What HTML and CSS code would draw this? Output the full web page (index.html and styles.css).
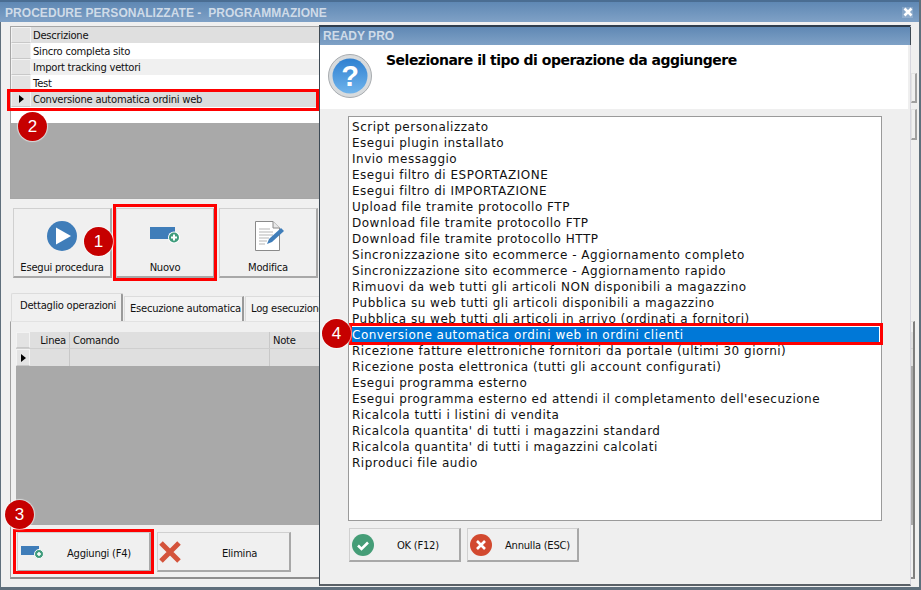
FILE: index.html
```html
<!DOCTYPE html>
<html lang="it">
<head>
<meta charset="utf-8">
<title>Procedure personalizzate</title>
<link rel="stylesheet" href="styles.css">
</head>
<body>
<div class="window">
  <div class="titlebar">
    <span class="title">PROCEDURE PERSONALIZZATE -&nbsp; PROGRAMMAZIONE</span>
    <span class="close"><svg width="10" height="10" viewBox="0 0 10 10"><path d="M1.500 1.500l7 7M8.500 1.500l-7 7" stroke="#fff" stroke-width="2.600" fill="none"/></svg></span>
  </div>
  <div class="main">
    <div class="pane">
      <div class="grid top-grid">
        <div class="row head"><span class="ind"></span><span class="cell">Descrizione</span></div>
        <div class="row"><span class="ind"></span><span class="cell">Sincro completa sito</span></div>
        <div class="row alt"><span class="ind"></span><span class="cell">Import tracking vettori</span></div>
        <div class="row"><span class="ind"></span><span class="cell">Test</span></div>
        <div class="row sel"><span class="ind"><i class="arrow"></i></span><span class="cell">Conversione automatica ordini web</span></div>
        <div class="row"><span class="ind blank"></span><span class="cell"></span></div>
      </div>
      <div class="toolbar">
        <div class="tbtn">
          <svg width="32" height="32" viewBox="0 0 32 32"><circle cx="16" cy="16" r="15" fill="#3f7db9"/><path d="M10 7.500L25 16 10 24.500z" fill="#fff"/></svg>
          <span>Esegui procedura</span>
        </div>
        <div class="tbtn">
          <svg width="32" height="32" viewBox="0 0 32 32"><rect x="1" y="7" width="25" height="12" fill="#3f7db9"/><circle cx="25" cy="17.500" r="6" fill="#fff"/><circle cx="25" cy="17.500" r="5" fill="#3f9c7c"/><path d="M25 14.500v6M22 17.500h6" stroke="#fff" stroke-width="2"/></svg>
          <span>Nuovo</span>
        </div>
        <div class="tbtn">
          <svg width="32" height="32" viewBox="0 0 32 32"><path d="M3.500 1.500H21L27.500 8V30.500H3.500z" fill="#fff" stroke="#8a8a8a"/><path d="M21 1.500V8H27.500" fill="#e8e8e8" stroke="#8a8a8a"/><path d="M7 9h11M7 12h14M7 15h14M7 18h10M7 21h8M7 24h6" stroke="#b5b5b5"/><path d="M29 8l3 3-12 11-5 2 2-5z" fill="#3f7db9"/></svg>
          <span>Modifica</span>
        </div>
      </div>
      <div class="tabs">
        <span class="tab active">Dettaglio operazioni</span>
        <span class="tab second">Esecuzione automatica</span>
        <span class="tab">Log esecuzione</span>
      </div>
      <div class="panel">
        <div class="grid sub-grid">
          <div class="row head"><span class="ind"></span><span class="c-line">Linea</span><span class="c-cmd">Comando</span><span class="c-note">Note</span></div>
          <div class="row data"><span class="ind"><i class="arrow"></i></span><span class="c-line"></span><span class="c-cmd"></span><span class="c-note"></span></div>
        </div>
        <div class="actions">
          <div class="abtn">
            <svg width="22" height="14" viewBox="0 0 22 14"><rect x="0" y="1" width="18" height="9" fill="#3f7db9"/><circle cx="18" cy="9" r="4.500" fill="#3f9c7c" stroke="#fff"/><path d="M18 7v4M16 9h4" stroke="#fff" stroke-width="1.500"/></svg>
            <span class="add-label">Aggiungi (F4)</span>
          </div>
          <div class="abtn del">
            <svg width="24" height="24" viewBox="0 0 24 24"><path d="M3 3l18 18M21 3L3 21" stroke="#d4533b" stroke-width="5" fill="none"/></svg>
            <span class="del-label">Elimina</span>
          </div>
        </div>
      </div>
    </div>
    <div class="rail"><span class="stub first"></span><span class="stub"></span></div>
  </div>

  <div class="dialog">
    <div class="dlg-title">READY PRO</div>
    <div class="dlg-head">
      <svg width="46" height="46" viewBox="0 0 46 46">
        <defs><linearGradient id="qb" x1="0" y1="0" x2="0" y2="1"><stop offset="0" stop-color="#2f80d0"/><stop offset="1" stop-color="#6fb4ec"/></linearGradient></defs>
        <circle cx="23" cy="23" r="21.500" fill="#d8dbdd" stroke="#a8acb0"/>
        <circle cx="23" cy="23" r="17.500" fill="url(#qb)"/>
        <text x="23" y="33" text-anchor="middle" class="qmark">?</text>
      </svg>
      <span class="dlg-heading">Selezionare il tipo di operazione da aggiungere</span>
    </div>
    <div class="dlg-body">
      <ul class="list">
        <li>Script personalizzato</li>
        <li>Esegui plugin installato</li>
        <li>Invio messaggio</li>
        <li>Esegui filtro di ESPORTAZIONE</li>
        <li>Esegui filtro di IMPORTAZIONE</li>
        <li>Upload file tramite protocollo FTP</li>
        <li>Download file tramite protocollo FTP</li>
        <li>Download file tramite protocollo HTTP</li>
        <li>Sincronizzazione sito ecommerce - Aggiornamento completo</li>
        <li>Sincronizzazione sito ecommerce - Aggiornamento rapido</li>
        <li>Rimuovi da web tutti gli articoli NON disponibili a magazzino</li>
        <li>Pubblica su web tutti gli articoli disponibili a magazzino</li>
        <li>Pubblica su web tutti gli articoli in arrivo (ordinati a fornitori)</li>
        <li class="picked">Conversione automatica ordini web in ordini clienti</li>
        <li>Ricezione fatture elettroniche fornitori da portale (ultimi 30 giorni)</li>
        <li>Ricezione posta elettronica (tutti gli account configurati)</li>
        <li>Esegui programma esterno</li>
        <li>Esegui programma esterno ed attendi il completamento dell'esecuzione</li>
        <li>Ricalcola tutti i listini di vendita</li>
        <li>Ricalcola quantita' di tutti i magazzini standard</li>
        <li>Ricalcola quantita' di tutti i magazzini calcolati</li>
        <li>Riproduci file audio</li>
      </ul>
      <div class="dlg-actions">
        <div class="dbtn">
          <svg width="22" height="22" viewBox="0 0 22 22"><circle cx="11" cy="11" r="11" fill="#459d77"/><path d="M6 11.500l3.500 3.500L16 8.500" stroke="#fff" stroke-width="2.600" fill="none"/></svg>
          <span class="ok-label">OK (F12)</span>
        </div>
        <div class="dbtn">
          <svg width="22" height="22" viewBox="0 0 22 22"><circle cx="11" cy="11" r="11" fill="#d2492f"/><path d="M7 7l8 8M15 7l-8 8" stroke="#fff" stroke-width="2.600" fill="none"/></svg>
          <span class="esc-label">Annulla (ESC)</span>
        </div>
      </div>
    </div>
  </div>

  <div class="mark mark-nuovo"></div>
  <div class="mark mark-row"></div>
  <div class="mark mark-add"></div>
  <div class="mark mark-item"></div>
  <div class="badge badge-1">1</div>
  <div class="badge badge-2">2</div>
  <div class="badge badge-3">3</div>
  <div class="badge badge-4">4</div>
</div>
</body>
</html>
```
FILE: styles.css
```css
* { box-sizing: border-box; }
html, body { margin: 0; padding: 0; }
body { width: 921px; height: 590px; overflow: hidden; background: #f0f0f0; }

.window {
  position: relative;
  width: 921px;
  height: 590px;
  overflow: hidden;
  display: flex;
  flex-direction: column;
  background: #f0f0f0;
  font: 10px/15px "DejaVu Sans", sans-serif;
  letter-spacing: -0.25px;
  color: #111;
  border-right: 2px solid #5f6f7c;
  border-bottom: 3px solid #5f6f7c;
  box-shadow: inset 1px 0 0 #5f6f7c;
}

.titlebar {
  height: 22px;
  flex: none;
  display: flex;
  align-items: center;
  justify-content: space-between;
  padding: 2px 6px 0 5px;
  background: linear-gradient(#5f88b4, #7fa1c6);
  border-top: 2px solid #4a6d92;
}
.title { font: bold 12px/18px "Liberation Sans", sans-serif; color: #cfdbe8; letter-spacing: 0.05px; }
.close {
  width: 11px; height: 11px;
  display: flex; align-items: center; justify-content: center;
  background: rgba(255,255,255,.18);
  margin-top: -2px;
}

.main { flex: 1; display: flex; min-height: 0; }
.pane { width: 911px; flex: none; padding: 4px 0 0 10px; display: flex; flex-direction: column; }

.grid { border: 1px solid #a6a6a6; background: #a9a9a9; overflow: hidden; }
.top-grid { height: 173px; }
.row { display: flex; height: 16px; line-height: 16px; background: #fff; white-space: nowrap; }
.row.alt { background: #f0f0f0; }
.row.sel { background: #dcdcdc; }
.row.head { background: #dfdfdf; }
.ind {
  width: 20px; flex: none;
  background: #e3e3e3;
  border: 1px solid #f3f3f3;
  border-bottom-color: #c8c8c8;
  display: flex; align-items: center; justify-content: center;
}
.ind.blank { background: #fff; border-color: #fff; }
.cell { padding: 1px 0 0 2px; }
.arrow { width: 0; height: 0; flex: none; border-left: 5px solid #000; border-top: 4.500px solid transparent; border-bottom: 4.500px solid transparent; }

.toolbar { display: flex; gap: 4px; padding: 9px 0 0 3px; }
.tbtn {
  width: 99px; height: 70px;
  display: flex; flex-direction: column; align-items: center;
  padding-top: 11px;
  background: #f0f0f0;
  border: 1px solid #d0d0d0;
  border-right: 2px solid #a8a8a8;
  border-bottom: 2px solid #a8a8a8;
}
.tbtn span { margin-top: 8px; line-height: 15px; white-space: nowrap; }

.tabs { display: flex; align-items: flex-end; height: 29px; margin-top: 14px; padding-left: 1px; }
.tab {
  height: 25px;
  line-height: 23px;
  padding: 0 4px 0 5px;
  margin-right: 1px;
  background: #f3f3f3;
  border: 1px solid #dcdcdc;
  border-right: 2px solid #9a9a9a;
  border-bottom: 0;
  white-space: nowrap;
}
.tab.second { width: 120px; }
.tab.active { height: 28px; line-height: 24px; width: 112px; padding-left: 8px; background: #f0f0f0; border-radius: 2px 2px 0 0; }

.panel {
  flex: 1;
  display: flex; flex-direction: column;
  margin: 0 -4px 8px 0;
  padding: 10px 0 0 5px;
  border-top: 1px solid #e2e2e2;
  border-left: 1px solid #a0a0a0;
  border-right: 2px solid #7e7e7e;
  border-bottom: 2px solid #8e8e8e;
}
.sub-grid { height: 193px; flex: none; border: 0; }
.sub-grid .row { height: 17px; background: #dfdfdf; }
.sub-grid .head { border-bottom: 1px solid #cfcfcf; }
.sub-grid .ind { width: 14px; }
.c-line { width: 40px; flex: none; text-align: right; padding: 1px 3px 0 0; border-right: 1px solid #c8c8c8; }
.c-cmd { width: 200px; flex: none; padding: 1px 0 0 3px; border-right: 1px solid #c8c8c8; }
.c-note { flex: 1; padding: 1px 0 0 3px; }

.actions { display: flex; gap: 6px; padding: 7px 0 0 1px; }
.abtn {
  width: 134px; height: 40px;
  display: flex; align-items: center;
  padding-left: 3px;
  background: #f0f0f0;
  border: 1px solid #d0d0d0;
  border-right: 2px solid #a8a8a8;
  border-bottom: 2px solid #a8a8a8;
  white-space: nowrap;
}
.abtn.del { padding-left: 0; }
.add-label { margin: 4px 0 0 24px; }
.del-label { margin: 4px 0 0 40px; }

.rail { flex: 1; display: flex; flex-direction: column; gap: 6px; padding-top: 51px; }
.stub { width: 6px; height: 31px; border: 1px solid #e2e2e2; border-right: 2px solid #a0a0a0; border-bottom: 2px solid #a0a0a0; }
.stub.first { height: 30px; }

/* the dialog floats over the main window */
.dialog {
  position: absolute;
  left: 319px; top: 25px;
  width: 592px; height: 561px;
  display: flex; flex-direction: column;
  background: #efefef;
  border-top: 2px solid #2f3e4e;
  border-left: 1px solid #3e4a55;
  border-right: 1px solid #d6d6de;
  border-bottom: 2px solid #5a6066;
}
.dlg-title {
  height: 18px; flex: none;
  padding-left: 3px;
  font: bold 12px/18px "Liberation Sans", sans-serif;
  color: #cfdbe8;
  background: linear-gradient(#5f88b4, #7fa1c6);
  box-shadow: 1px 0 0 #3e4a55;
  letter-spacing: 0;
}
.dlg-head {
  height: 64px; flex: none;
  margin-right: 2px;
  display: flex;
  align-items: flex-start;
  padding: 8px 0 0 7px;
  background: #fff;
}
.dlg-heading { margin: -2px 0 0 13px; font: bold 14px/18px "DejaVu Sans", sans-serif; letter-spacing: -0.5px; color: #000; }
.qmark { font: bold 29px "Liberation Sans", sans-serif; fill: #fff; letter-spacing: 0; }

.dlg-body { flex: 1; padding: 7px 0 0 28px; display: flex; flex-direction: column; }
.list {
  width: 534px; height: 405px;
  margin: 0; padding: 2px;
  flex: none;
  list-style: none;
  background: #fff;
  border: 1px solid #9a9a9a;
  font: 12px/16px "DejaVu Sans", sans-serif;
  letter-spacing: 0.51px;
  color: #111;
}
.list li { padding-left: 1px; height: 16px; white-space: nowrap; }
.list .picked { background: #0078d7; color: #fff; }

.dlg-actions { display: flex; gap: 6px; padding: 7px 0 0 1px; }
.dbtn {
  width: 112px; height: 34px;
  display: flex; align-items: center;
  padding-left: 2px;
  background: #f0f0f0;
  border: 1px solid #d0d0d0;
  border-right: 2px solid #a8a8a8;
  border-bottom: 2px solid #a8a8a8;
  white-space: nowrap;
}
.ok-label { margin: 2px 0 0 23px; }
.esc-label { margin: 2px 0 0 13px; }

/* annotation overlays */
.mark { position: absolute; border: 3px solid #fe0000; pointer-events: none; }
.mark-nuovo { left: 113px; top: 204px; width: 104px; height: 77px; }
.mark-row { left: 7px; top: 89px; width: 312px; height: 22px; }
.mark-add { left: 13px; top: 529px; width: 141px; height: 45px; }
.mark-item { left: 349px; top: 323px; width: 534px; height: 22px; }

.badge {
  position: absolute;
  width: 29px; height: 29px;
  border-radius: 50%;
  background: #c60000;
  box-shadow: 0 0 1px 1px rgba(255,255,255,.6);
  color: #fff;
  font: 17px/29px "Liberation Sans", sans-serif;
  letter-spacing: 0;
  text-align: center;
}
.badge-1 { left: 84px; top: 227px; }
.badge-2 { left: 18px; top: 112px; }
.badge-3 { left: 5px; top: 500px; }
.badge-4 { left: 322px; top: 319px; }
```
